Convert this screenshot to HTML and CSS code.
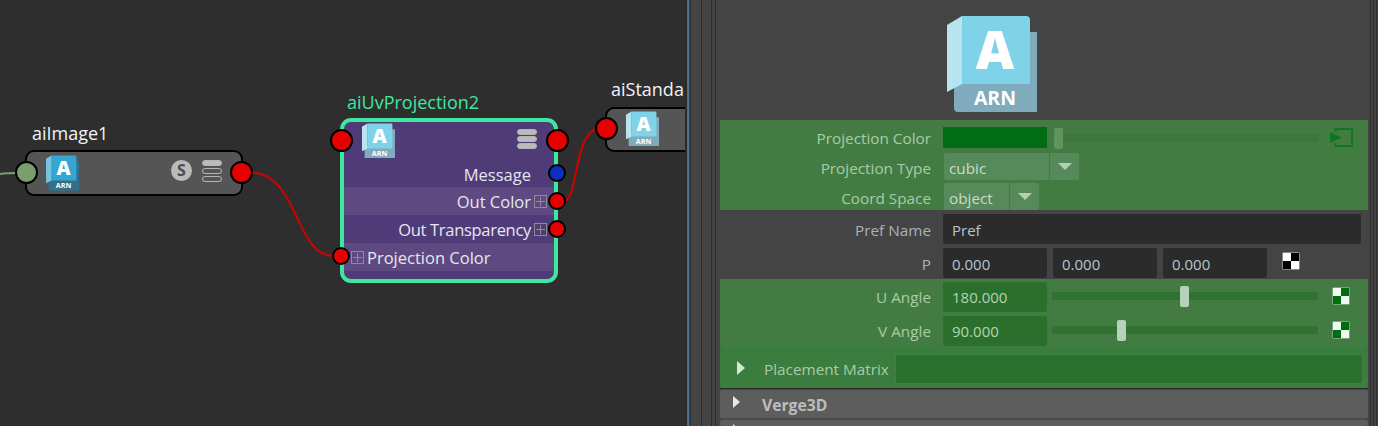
FILE: index.html
```html
<!DOCTYPE html>
<html>
  <head>
    <title>Node Editor</title>
    <link rel="stylesheet" href="styles.css">
  </head>
  <body>
    <div class="screen">
      <!-- node graph -->
      <div class="graph">
        <svg class="wires" width="685" height="426">
          <path class="wire-green" d="M0 174C6 173 10 173 18 173"/>
          <path class="wire-red" d="M250 172C300 174 294 256 334 256"/>
          <path class="wire-red" d="M565 201C578 197 574 134 598 128"/>
        </svg>

        <div class="node-label label-image">aiImage1</div>
        <div class="node node-image">
          <svg class="logo logo-blue" viewBox="0 -4 90 100">
            <path class="logo-dark" d="M7 62h83v34H11a4 4 0 0 1-4-4z"/>
            <path class="logo-dark" d="M80 16h10v50H80z"/>
            <path class="logo-main" d="M15 0h64a4 4 0 0 1 4 4v64H15z"/>
            <path class="logo-fold" d="M0 9 15 0v68L0 76z"/>
            <text class="logo-a" x="48" y="53" text-anchor="middle">A</text>
            <text class="logo-arn" x="48" y="89" text-anchor="middle">ARN</text>
          </svg>
          <span class="badge-s">S</span>
          <span class="stack">
            <i class="on"></i><i></i><i></i>
          </span>
        </div>
        <span class="port port-big port-green port-image-in"></span>
        <span class="port port-big port-image-out"></span>

        <div class="node-label label-uv">aiUvProjection2</div>
        <div class="node node-uv">
          <div class="uv-head">
            <svg class="logo" viewBox="0 -4 90 100">
              <path class="logo-dark" d="M7 62h83v34H11a4 4 0 0 1-4-4z"/>
              <path class="logo-dark" d="M80 16h10v50H80z"/>
              <path class="logo-main" d="M15 0h64a4 4 0 0 1 4 4v64H15z"/>
              <path class="logo-fold" d="M0 9 15 0v68L0 76z"/>
              <text class="logo-a" x="48" y="53" text-anchor="middle">A</text>
              <text class="logo-arn" x="48" y="89" text-anchor="middle">ARN</text>
            </svg>
            <span class="stack stack-full">
              <i class="on"></i><i class="on"></i><i class="on"></i>
            </span>
          </div>
          <div class="attr attr-out attr-message">Message</div>
          <div class="attr attr-out attr-light">Out Color<b class="plus"></b></div>
          <div class="attr attr-out"><span class="tight">Out Transparency</span><b class="plus"></b></div>
          <div class="attr attr-in attr-light"><b class="plus"></b>Projection Color</div>
        </div>
        <span class="port port-big port-uv-in"></span>
        <span class="port port-big port-uv-out"></span>
        <span class="port port-blue port-message"></span>
        <span class="port port-outcolor"></span>
        <span class="port port-outtrans"></span>
        <span class="port port-projcolor"></span>

        <div class="node-label label-std">aiStanda</div>
        <div class="node node-std">
          <svg class="logo" viewBox="0 -4 90 100">
            <path class="logo-dark" d="M7 62h83v34H11a4 4 0 0 1-4-4z"/>
            <path class="logo-dark" d="M80 16h10v50H80z"/>
            <path class="logo-main" d="M15 0h64a4 4 0 0 1 4 4v64H15z"/>
            <path class="logo-fold" d="M0 9 15 0v68L0 76z"/>
            <text class="logo-a" x="48" y="53" text-anchor="middle">A</text>
            <text class="logo-arn" x="48" y="89" text-anchor="middle">ARN</text>
          </svg>
        </div>
        <span class="port port-big port-std-in"></span>
      </div>

      <!-- splitter between the graph and the attribute editor -->
      <div class="splitter"><i></i><i></i><i></i><i></i><i></i></div>

      <!-- attribute editor -->
      <div class="editor">
        <div class="editor-logo">
          <svg class="logo-large" viewBox="0 -4 90 100">
            <path class="logo-dark" d="M7 62h83v34H11a4 4 0 0 1-4-4z"/>
            <path class="logo-dark" d="M80 16h10v50H80z"/>
            <path class="logo-main" d="M15 0h64a4 4 0 0 1 4 4v64H15z"/>
            <path class="logo-fold" d="M0 9 15 0v68L0 76z"/>
            <text class="logo-a" x="48" y="53" text-anchor="middle">A</text>
            <text class="logo-arn" x="48" y="89" text-anchor="middle">ARN</text>
          </svg>
        </div>

        <div class="group group-green">
          <div class="row row-color">
            <label>Projection Color</label>
            <span class="swatch"></span>
            <span class="slider slider-color">
              <i class="handle"></i>
            </span>
            <svg class="connect" width="23" height="19" viewBox="0 0 23 19">
              <path d="M5.5 4V1H22v17H5.5v-3" fill="none" stroke="#12761f" stroke-width="2"/>
              <path d="M0 4l12 5.5L0 15z" fill="#12761f"/>
            </svg>
          </div>
          <div class="row row-select">
            <label>Projection Type</label>
            <span class="select select-type"><span>cubic</span><i></i></span>
          </div>
          <div class="row row-select">
            <label>Coord Space</label>
            <span class="select select-space"><span>object</span><i></i></span>
          </div>
        </div>

        <div class="group group-plain">
          <div class="row row-input">
            <label>Pref Name</label>
            <span class="input input-wide">Pref</span>
          </div>
          <div class="row row-input">
            <label>P</label>
            <span class="input">0.000</span>
            <span class="input">0.000</span>
            <span class="input">0.000</span>
            <span class="checker"><i></i><i></i><i></i><i></i></span>
          </div>
        </div>

        <div class="group group-green group-angles">
          <div class="row row-input">
            <label>U Angle</label>
            <span class="input input-green">180.000</span>
            <span class="slider slider-angle">
              <i class="handle handle-light handle-u"></i>
            </span>
            <span class="checker checker-green"><i></i><i></i><i></i><i></i></span>
          </div>
          <div class="row row-input">
            <label>V Angle</label>
            <span class="input input-green">90.000</span>
            <span class="slider slider-angle">
              <i class="handle handle-light handle-v"></i>
            </span>
            <span class="checker checker-green"><i></i><i></i><i></i><i></i></span>
          </div>
        </div>

        <div class="frame frame-green">
          <i class="arrow"></i>
          <span class="frame-label">Placement Matrix</span>
          <span class="matrix"></span>
        </div>
        <div class="frame frame-gray">
          <i class="arrow"></i>
          <span class="frame-title">Verge3D</span>
        </div>
        <div class="frame frame-gray frame-cut">
          <i class="arrow"></i>
        </div>
      </div>

      <!-- window edge on the right -->
      <div class="rails"><i></i><i></i><i></i></div>
    </div>
  </body>
</html>
```

FILE: styles.css
```css
/* Page */
html, body {
  margin: 0;
  height: 426px;
  overflow: hidden;
}

.screen {
  display: flex;
  width: 1378px;
  height: 426px;
  font-family: "Open Sans", "Noto Sans", sans-serif;
}

/* Logo */
.logo-dark { fill: #7fabbd; }
.logo-main { fill: #7fd3e9; }
.logo-fold { fill: #b8e4f0; }

.logo-blue .logo-dark { fill: #32708e; }
.logo-blue .logo-main { fill: #35a5d2; }
.logo-blue .logo-fold { fill: #76c3e0; }

.logo-a {
  font: 800 53px "Open Sans", sans-serif;
  fill: #fff;
}

.logo-arn {
  font: 700 19.5px "Open Sans", sans-serif;
  fill: #fff;
}

/* the viewBox has 4 spare units on top for the big letter */
.logo {
  display: block;
  flex: none;
  width: 33px;
  height: 36.7px;
  margin-top: -1.5px;
}

.logo-large {
  display: block;
  width: 90px;
  height: 100px;
}

/* Node graph */
.graph {
  position: relative;
  flex: none;
  width: 685px;
  height: 426px;
  overflow: hidden;
  background: #2e2e2e;
}

.wires {
  position: absolute;
  left: 0;
  top: 0;
}

.wire-red {
  fill: none;
  stroke: #d40000;
  stroke-width: 2;
}

.wire-green {
  fill: none;
  stroke: #7a9e6f;
  stroke-width: 2;
}

.node-label {
  position: absolute;
  font-size: 18px;
  line-height: 24px;
  color: #f0f4f8;
  white-space: nowrap;
}

.label-image { left: 32px; top: 121px; }
.label-uv { left: 347px; top: 90px; color: #3fe8a0; }
.label-std { left: 611px; top: 77px; width: 72px; overflow: hidden; }

.node {
  position: absolute;
  box-sizing: border-box;
}

.node-image {
  left: 25px;
  top: 150px;
  width: 218px;
  height: 46px;
  display: flex;
  align-items: center;
  padding: 0 19px;
  background: #555;
  border: 2px solid #000;
  border-radius: 9px;
}

.node-image .logo {
  margin-right: auto;
}

.node-std {
  left: 605px;
  top: 107px;
  width: 100px;
  height: 45px;
  padding: 2px 0 0 19px;
  background: #555;
  border: 2px solid #000;
  border-radius: 9px;
}

.badge-s {
  width: 21px;
  height: 21px;
  margin: 0 10px 5px 0;
  border-radius: 50%;
  background: #bbb;
  color: #4c4c4c;
  font-size: 16px;
  font-weight: 700;
  line-height: 21px;
  text-align: center;
}

.stack {
  display: flex;
  flex-direction: column;
  gap: 2px;
  width: 20px;
  margin-bottom: 5px;
}

.stack i {
  display: block;
  box-sizing: border-box;
  height: 6px;
  border: 1px solid #b5b5b5;
  border-radius: 3px;
}

.stack i.on {
  background: #bbb;
}

.stack-full {
  gap: 1px;
}

.node-uv {
  left: 340px;
  top: 118px;
  width: 218px;
  height: 165px;
  background: #4f3b78;
  border: 4px solid #3fe8a0;
  border-radius: 11px;
  color: #e6e6f0;
  font-size: 16.5px;
  overflow: hidden;
}

.uv-head {
  display: flex;
  justify-content: space-between;
  height: 37px;
  padding: 1px 17px 0 18px;
  box-sizing: border-box;
}

.uv-head .stack {
  margin-top: 6px;
}

.attr {
  display: flex;
  align-items: center;
  box-sizing: border-box;
  height: 28px;
  white-space: nowrap;
}

.attr-light {
  background: #5e4a80;
}

.attr-out {
  justify-content: flex-end;
  padding-right: 7px;
}

.attr-message {
  padding-right: 23px;
  padding-top: 2px;
}

.attr-in {
  padding-left: 7px;
}

.tight {
  letter-spacing: -0.3px;
}

.plus {
  position: relative;
  flex: none;
  box-sizing: border-box;
  width: 13px;
  height: 13px;
  margin-left: 3px;
  border: 1px solid #8d8d8d;
}

.attr-in .plus {
  margin: 0 3px 0 0;
}

.plus::before,
.plus::after {
  content: "";
  position: absolute;
  background: #8d8d8d;
}

.plus::before { left: 1px; right: 1px; top: 5px; height: 1px; }
.plus::after { top: 1px; bottom: 1px; left: 5px; width: 1px; }

/* Ports sit on the node edges */
.port {
  position: absolute;
  box-sizing: border-box;
  width: 18px;
  height: 18px;
  margin: -9px 0 0 -9px;
  background: #e60000;
  border: 2px solid #000;
  border-radius: 50%;
}

.port-big {
  width: 23px;
  height: 23px;
  margin: -11.5px 0 0 -11.5px;
}

.port-green { background: #7a9e6f; }
.port-blue { background: #0c2fbe; }

.port-image-in { left: 26px; top: 172px; }
.port-image-out { left: 241.5px; top: 172px; }
.port-uv-in { left: 341px; top: 140px; }
.port-uv-out { left: 557px; top: 140px; }
.port-message { left: 557px; top: 173px; }
.port-outcolor { left: 557px; top: 201px; }
.port-outtrans { left: 557px; top: 229px; }
.port-projcolor { left: 341px; top: 256px; }
.port-std-in { left: 606px; top: 128px; }

/* Splitter */
.splitter {
  flex: none;
  display: flex;
  box-sizing: border-box;
  width: 35px;
  background: #444;
  border-left: 2px solid #2a2a2a;
}

.splitter i {
  width: 1px;
  background: #2c2c2c;
}

.splitter i:nth-child(1) { width: 2px; background: #4c6f8f; }
.splitter i:nth-child(2) { margin-left: 1px; }
.splitter i:nth-child(3) { margin-left: 10px; }
.splitter i:nth-child(4) { margin-left: 9px; }
.splitter i:nth-child(5) { margin-left: 3px; }

.rails {
  flex: none;
  display: flex;
  gap: 2px;
  width: 10px;
  padding-left: 2px;
  box-sizing: border-box;
  background: #444;
}

.rails i {
  width: 1px;
  background: #2c2c2c;
}

/* Attribute editor */
.editor {
  flex: none;
  width: 648px;
  background: #444;
  color: #aab2ba;
  font-size: 15.3px;
}

.editor-logo {
  display: flex;
  box-sizing: border-box;
  height: 120px;
  padding: 12px 0 0 227px;
}

.group-green {
  background: #437c43;
  color: #a9cba9;
}

.group-plain {
  padding-top: 4px;
}

.row {
  display: flex;
  align-items: center;
  gap: 6px;
}

.row label {
  flex: none;
  width: 211px;
  margin-right: 6px;
  text-align: right;
}

.row-color {
  box-sizing: border-box;
  height: 28px;
  padding-top: 7px;
  margin-bottom: 2px;
}

.row-select {
  box-sizing: border-box;
  height: 30px;
  padding-top: 3px;
}

.row-select label {
  margin-right: 7px;
  padding-top: 2px;
}

.row-input {
  height: 30px;
  margin-bottom: 4px;
}

.group-plain label {
  padding-top: 2px;
}

.group-plain .input {
  line-height: 32px;
}

.group-plain .row-input:last-child {
  margin-bottom: 1px;
}

.swatch {
  flex: none;
  width: 104px;
  height: 21px;
  background: #006d12;
}

.slider {
  position: relative;
  display: block;
  flex: none;
  border-radius: 2px;
}

.slider-color {
  width: 264px;
  height: 8px;
  margin: 0 6px 0 1px;
  background: linear-gradient(to right, transparent 9px, #3e763e 9px);
}

.slider-angle {
  width: 266px;
  height: 8px;
  margin: 0 8px 2px -1px;
  background: #2f7232;
}

.handle {
  position: absolute;
  top: -6px;
  left: 0;
  width: 9px;
  height: 21px;
  background: #5f9460;
  border-radius: 2px;
}

.handle-light { background: #b7d0b8; }
.handle-u { left: 128px; }
.handle-v { left: 65px; }

.select {
  display: flex;
  flex: none;
  height: 27px;
  line-height: 30px;
  color: #c9dcc9;
  background: #568a5a;
  border-radius: 2px;
}

.select span {
  box-sizing: border-box;
  padding-left: 5px;
  border-right: 1px solid #437c43;
}

.select i {
  position: relative;
  flex: 1;
}

.select i::after {
  content: "";
  position: absolute;
  left: 50%;
  top: 10px;
  margin-left: -7px;
  border: 7px solid transparent;
  border-top: 7px solid #b5ceb5;
  border-bottom: 0;
}

.select-type { width: 135px; }
.select-type span { width: 106px; }
.select-space { width: 95px; }
.select-space span { width: 66px; }

.input {
  flex: none;
  box-sizing: border-box;
  width: 104px;
  height: 30px;
  padding-left: 9px;
  font-size: 15px;
  line-height: 30px;
  color: #b8c4d0;
  background: #2b2b2b;
  border-radius: 2px;
}

.input-wide {
  width: 418px;
}

.input-green {
  color: #b5d2b5;
  background: #2a702c;
}

.checker {
  flex: none;
  display: grid;
  grid-template-columns: 8px 8px;
  grid-template-rows: 8px 8px;
  padding: 1px;
  margin: 0 0 4px 9px;
  background: #8c8c8c;
  border-radius: 2px;
}

.checker i { background: #fff; }
.checker i:nth-child(2),
.checker i:nth-child(3) { background: #000; }

.checker-green {
  margin: 0 0 3px 0;
  background: #7aa47c;
}

.checker-green i { background: #f0fbf0; }
.checker-green i:nth-child(2),
.checker-green i:nth-child(3) { background: #006d12; }

.group-angles {
  padding: 3px 0 2px;
}

.group-angles .row-input:last-child {
  margin-bottom: 0;
}

/* Collapsed frames */
.frame {
  display: flex;
  align-items: center;
  box-sizing: border-box;
  border-radius: 2px;
}

.arrow {
  flex: none;
  width: 0;
  height: 0;
  border-left: 7px solid #e8e8e8;
  border-top: 6.5px solid transparent;
  border-bottom: 6.5px solid transparent;
}

.frame-green {
  height: 41px;
  padding: 0 5px 0 17px;
  color: #a9cba9;
  background: #3a7d3e;
  border-top: 1px solid #35803a;
  border-bottom: 1px solid #2a2a2a;
}

.frame-green .arrow {
  border-left: 8px solid #d4ecd4;
  border-top-width: 7.5px;
  border-bottom-width: 7.5px;
  margin-top: -2px;
}

.frame-label {
  margin-left: 19px;
  white-space: nowrap;
}

.matrix {
  flex: 1;
  height: 30px;
  margin-left: 6px;
  background: #2b712e;
  border: 1px solid #438046;
  box-sizing: border-box;
}

.frame-gray {
  height: 30px;
  margin-top: 1px;
  padding-left: 13px;
  background: #5d5d5d;
  border-bottom: 2px solid #4a4a4a;
}

.frame-gray .arrow {
  margin-top: -5px;
}

.frame-title {
  margin-left: 22px;
  padding-top: 2px;
  font-size: 15.7px;
  font-weight: 700;
  color: #bdbdbd;
}

.frame-cut {
  height: 6px;
  margin-top: 0;
  padding-top: 4px;
  border: 0;
  align-items: flex-start;
  overflow: hidden;
}

.frame-cut .arrow {
  margin-top: 0;
}
```
